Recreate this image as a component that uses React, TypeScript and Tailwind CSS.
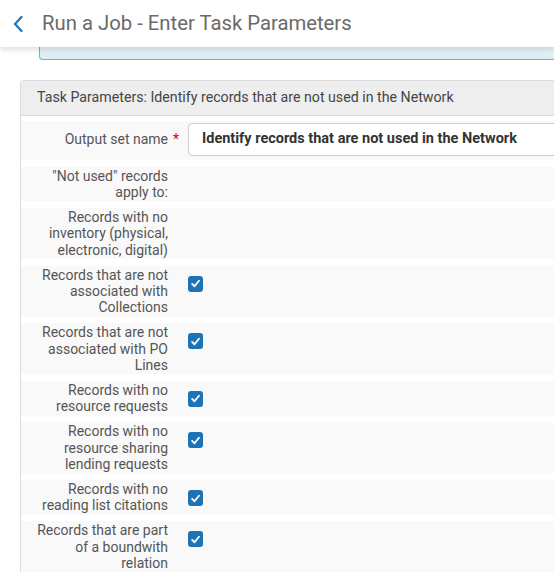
import React from 'react';

const rows: { label: string; checked?: boolean }[] = [
    { label: '"Not used" records apply to:' },
    { label: 'Records with no inventory (physical, electronic, digital)' },
    { label: 'Records that are not associated with Collections', checked: true },
    { label: 'Records that are not associated with PO Lines', checked: true },
    { label: 'Records with no resource requests', checked: true },
    { label: 'Records with no resource sharing lending requests', checked: true },
    { label: 'Records with no reading list citations', checked: true },
    { label: 'Records that are part of a boundwith relation', checked: true },
];

function Check() {
    return (
        <span className="w-[15px] h-[16px] rounded-[3px] bg-[#1c74b7] flex items-center justify-center">
            <svg width="11" height="11" viewBox="0 0 12 12">
                <path d="M2.3 6.4 L4.9 9 L9.8 3" fill="none" stroke="white" strokeWidth="2" strokeLinecap="round" strokeLinejoin="round" />
            </svg>
        </span>
    );
}

export default function App() {
    return (
        <div className="w-[554px] h-[572px] overflow-hidden bg-white relative font-['Roboto',sans-serif]">
            {/* Info box peeking under the header */}
            <div className="absolute left-[39px] top-[20px] right-[-10px] h-[40px] rounded-bl-[4px] border-l border-b border-[#2fcfda] bg-gradient-to-b from-white to-[#dcedf4]" />

            {/* Header */}
            <div className="relative z-10 h-[47px] bg-white shadow-[0_3px_5px_rgba(0,0,0,0.12)] flex items-center">
                <svg className="ml-[12px]" width="12" height="18" viewBox="0 0 12 18">
                    <path d="M9.5 2 L3 9 L9.5 16" fill="none" stroke="#1b75bb" strokeWidth="2.2" strokeLinecap="round" strokeLinejoin="round" />
                </svg>
                <h1 className="ml-[18px] text-[20.3px] text-[#6a6a6a] leading-none">Run a Job - Enter Task Parameters</h1>
            </div>

            {/* Panel */}
            <div className="absolute left-[20px] top-[80px] w-[560px] border-l border-t border-[#dcdcdc] rounded-tl-[4px]">
                <div className="h-[35px] bg-[#eeeeee] border-b border-[#dddddd] flex items-center pl-[16px] text-[14.2px] text-[#454545]">
                    Task Parameters: Identify records that are not used in the Network
                </div>

                <div className="flex flex-col gap-[6.5px] pt-[5px] text-[14px] leading-[16.4px] text-[#555555]">
                    <div className="flex items-center bg-[#f9f9f9] pt-[2px] pb-[4px]">
                        <div className="w-[147px] pl-[5px] text-right">Output set name</div>
                        <div className="w-[20px] text-[#e00000] pl-[5px]">*</div>
                        <div className="h-[33px] flex-1 border border-[#cccccc] rounded-[4px] bg-white flex items-center pl-[13px] text-[14.5px] font-bold text-[#333333]">
                            Identify records that are not used in the Network
                        </div>
                    </div>

                    {rows.map((r, i) => (
                        <div key={i} className="flex items-start bg-[#f9f9f9] py-[1px]">
                            <div className="w-[147px] pl-[5px] text-right">{r.label}</div>
                            <div className="w-[20px]" />
                            {r.checked && (
                                <div className="mt-[9px]">
                                    <Check />
                                </div>
                            )}
                        </div>
                    ))}
                </div>
            </div>
        </div>
    );
}
